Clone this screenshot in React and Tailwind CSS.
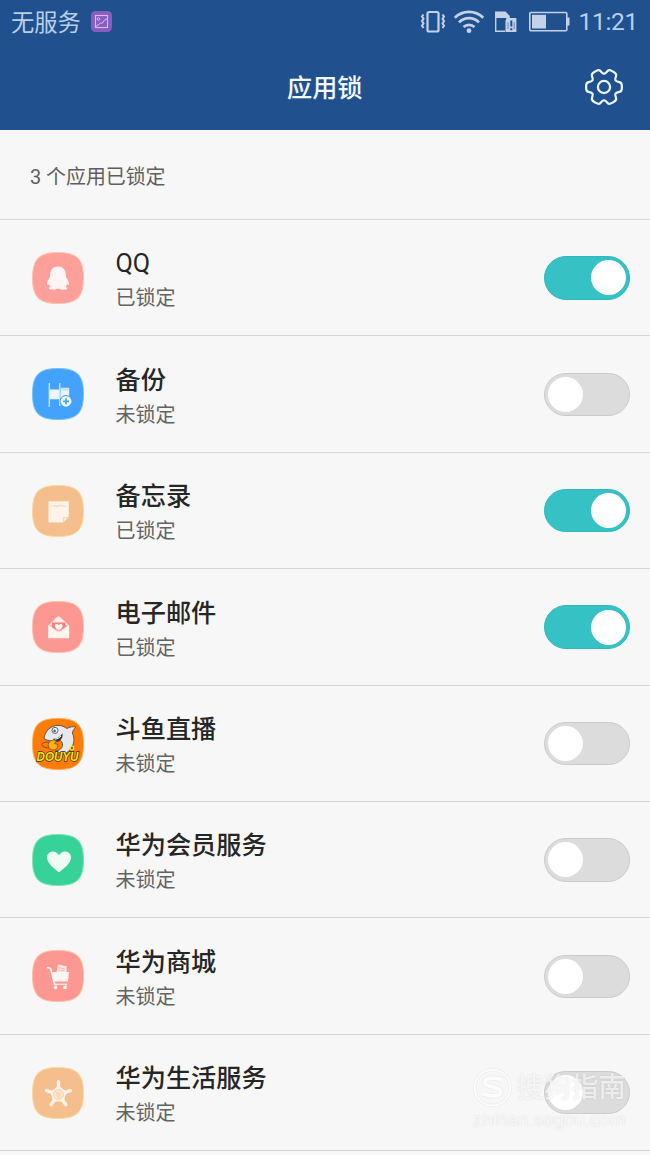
import { useState } from 'react';

const SQUIRCLE = 'M26 .5C45 .5 51.5 7 51.5 26S45 51.5 26 51.5S.5 45 .5 26S7 .5 26 .5Z';

function AppIcon({ fill, edge, children }) {
  return (
    <svg width="52" height="52" viewBox="0 0 52 52" className="shrink-0">
      <path d={SQUIRCLE} fill={fill} stroke={edge} strokeWidth="1" />
      {children}
    </svg>
  );
}

function QQIcon() {
  return (
    <AppIcon fill="#fe9f9a" edge="#fdc4ae">
      <path
        fill="#fff6f4"
        d="M26 14.6c4.8 0 7.7 3.4 7.8 8 0 1.2.1 2 .5 2.900 1.200 2.300 3 4.300 2.700 6.700-.1 1-1 1.100-1.900-.2-.3 1.100-.8 2-1.500 2.800 1.300.6 1.800 1.300 1.500 2-.6 1.100-5.700 1.300-7.600-.1h-3c-1.900 1.400-7 1.200-7.600.1-.3-.7.200-1.400 1.500-2-.7-.8-1.200-1.700-1.500-2.800-.9 1.300-1.800 1.200-1.900.2-.3-2.400 1.500-4.400 2.700-6.700.4-.9.500-1.700.5-2.900.1-4.600 3-8 7.800-8z"
      />
    </AppIcon>
  );
}

function BackupIcon() {
  return (
    <AppIcon fill="#42a2fc" edge="#7cc0fb">
      <path d="M17.300 15v24M27.800 15v23" stroke="#cfe7ff" strokeWidth="1.300" />
      <path d="M18 21.500h9.200v9.800H18zM28.600 20h8.600v10h-8.600z" fill="#eaf5ff" />
      <path d="M28.600 20h8.600M28.600 21.800h8.600" stroke="#9fcfff" strokeWidth=".8" />
      <circle cx="34" cy="33.300" r="6.200" fill="#42a2fc" />
      <circle cx="34" cy="33.300" r="5.400" fill="#f1f9ff" />
      <path d="M34 30.300v6M31 33.300h6" stroke="#42a2fc" strokeWidth="1.700" />
    </AppIcon>
  );
}

function MemoIcon() {
  return (
    <AppIcon fill="#f4bf8c" edge="#fbd8a0">
      <path d="M16.500 16.200h20.300v15.600l-5.800 5.700H16.500z" fill="#fff3ea" />
      <path d="M36.800 31.800l-5.800 5.700c.9-1.600 1-3.200.4-5 1.900.6 3.700.3 5.400-.7z" fill="#fff3ea" />
      <path d="M31 37.500c.9-1.600 1-3.200.4-5 1.900.6 3.700.3 5.400-.7" fill="none" stroke="#f4bf8c" strokeWidth=".7" />
      <path d="M19.500 21.600q2-1.600 4.500-.6t4.500-.8q1.500 1.200 5.500 1.100" fill="none" stroke="#f3cfae" strokeWidth="1" />
    </AppIcon>
  );
}

function MailIcon() {
  return (
    <AppIcon fill="#fd9792" edge="#fdc0a8">
      <path d="M16.300 24.500L24.900 16q1.600-1.300 3.200 0l8.900 8.500z" fill="#ffebe8" />
      <path d="M20 21.500h13.500v6h-13.500z" fill="#f5807c" />
      <path d="M26.700 29.500c-3-2-4.300-3.500-3.900-5.200.5-1.700 2.900-1.900 3.900-.1 1-1.800 3.400-1.600 3.900.1.400 1.700-.9 3.200-3.900 5.200z" fill="#fff4f0" />
      <path d="M16.200 23.800l7.500 5.200q3 2.600 6 0l7.500-5.200v13.400H16.200z" fill="#fff4f0" />
      <path d="M22.500 28.200q4.200 4.500 8.400 0" fill="none" stroke="#fbb5b0" strokeWidth=".8" />
    </AppIcon>
  );
}

function DouyuIcon() {
  return (
    <AppIcon fill="#fd7c06" edge="#fdae62">
      <path d="M20 25c-4-1.500-9-1-10.500 1.500 1.500 3 5 3.500 9 3.500" fill="none" stroke="#8d4a08" strokeWidth="1" />
      <path
        d="M12 20.500C13 13 18.500 7.500 26 7.400c4 0 6.800 1.300 8.800 3.200 2.700-1.700 5.700-2.300 9.200-1.500-2 1.600-3.200 3.500-3.700 5.900 2.700 5.500 1.900 12-2.100 16.500-2.500 3.500-6.700 5.500-12.200 6 1-1 1.500-2 1.500-3l-4-1.500c3.500-.5 6.500-2 7-5.500.3-2.500-.5-4-2-5-4.500 1-12.500 1-16.500-2z"
        fill="#e6e8ed" stroke="#4a403a" strokeWidth=".8"
      />
      <path d="M21 20.700c4 .5 7.500-1.500 9.300-5.400 1 3.700-.8 7-4.300 8.200-2 .2-4-.8-5-2.800z" fill="#34343a" />
      <path d="M22.800 21.300q4-.3 6.200-3.200" fill="none" stroke="#f6f6f6" strokeWidth="1" />
      <circle cx="23" cy="12.400" r="3" fill="#fff" stroke="#3a3a40" strokeWidth=".8" />
      <circle cx="22.600" cy="12.900" r="1.300" fill="#26789a" />
      <path d="M17 24.500c1.500-2.300 5-3 7.500-1.500l-2 2.500 3.500 1-1 4c-2.500 2.500-7 1.800-8.500-1.500-.6-1.500-.2-3.200.5-4.500z" fill="#f5b320" stroke="#7a4508" strokeWidth=".7" />
      <circle cx="40" cy="30" r="1.800" fill="#5a7a1b" stroke="#f4e332" strokeWidth="1.200" />
      <text
        x="25.500" y="43" textAnchor="middle" textLength="42" lengthAdjust="spacingAndGlyphs"
        fontFamily="Liberation Sans, sans-serif" fontSize="13" fontStyle="italic" fontWeight="700"
        fill="#f2e020" stroke="#3d3208" strokeWidth="1.500" paintOrder="stroke"
      >
        DOUYU
      </text>
    </AppIcon>
  );
}

function HeartIcon() {
  return (
    <AppIcon fill="#37d298" edge="#7fe5b4">
      <path d="M27 38.300C19.500 32.500 15 28.500 15 23.500c0-3.700 2.700-6.100 5.800-6.100 2.700 0 4.900 1.300 6.200 3.900 1.300-2.600 3.500-3.900 6.200-3.900 3.100 0 5.800 2.400 5.800 6.100 0 5-4.500 9-12 14.800z" fill="#edfcf4" />
    </AppIcon>
  );
}

function CartIcon() {
  return (
    <AppIcon fill="#fd9792" edge="#fdc0a8">
      <path d="M24.500 22l1.700-7.500 8.600 1.800L34.500 22z" fill="#ffe6e2" />
      <path d="M26.500 17.600l6.700 1.500M26 19.800l6.500 1" stroke="#fdb0aa" strokeWidth=".8" />
      <path d="M15.500 17.600l3 .9 4 15.500" fill="none" stroke="#fff4f1" strokeWidth="1.600" strokeLinecap="round" />
      <path d="M19 22h18l-1 9.500H21.500z" fill="#fff4f1" />
      <path d="M22 34.200h13.200" stroke="#fff4f1" strokeWidth="1.200" />
      <path d="M24 34v3M34 34v3" stroke="#fff4f1" strokeWidth="1" />
      <circle cx="23.600" cy="37.500" r="1.800" fill="#fff4f1" />
      <circle cx="33" cy="37.500" r="1.800" fill="#fff4f1" />
    </AppIcon>
  );
}

function LifeIcon() {
  return (
    <AppIcon fill="#f4bf8c" edge="#fbd8a0">
      {[0, 72, 144, 216, 288].map(a => (
        <g key={a} transform={`rotate(${a} 26.500 27.500)`} fill="#fff3e8">
          <rect x="24.700" y="13.300" width="3.600" height="5" rx="1.600" />
          <path d="M25.200 17h2.600l.6 3 3.100 3h-10l3.100-3z" />
        </g>
      ))}
      <circle cx="26.500" cy="27.500" r="6.800" fill="#fff3e8" />
      <circle cx="26.500" cy="27.500" r="5" fill="#fde6d1" stroke="#f6cba2" strokeWidth=".8" />
      <path d="M24 26h5M23.500 28h5.500M25 30h3.500" stroke="#f6cba2" strokeWidth=".8" />
    </AppIcon>
  );
}

const APPS = [
  { name: 'QQ', Icon: QQIcon, locked: true },
  { name: '备份', Icon: BackupIcon, locked: false },
  { name: '备忘录', Icon: MemoIcon, locked: true },
  { name: '电子邮件', Icon: MailIcon, locked: true },
  { name: '斗鱼直播', Icon: DouyuIcon, locked: false },
  { name: '华为会员服务', Icon: HeartIcon, locked: false },
  { name: '华为商城', Icon: CartIcon, locked: false },
  { name: '华为生活服务', Icon: LifeIcon, locked: false },
];

// Closed path through the polygon's points, each corner rounded off
function roundedPath(points, k) {
  const n = points.length;
  const mix = (a, b, t) => [a[0] + (b[0] - a[0]) * t, a[1] + (b[1] - a[1]) * t];
  const parts = points.map((p, i) => {
    const from = mix(p, points[(i + n - 1) % n], k);
    const to = mix(p, points[(i + 1) % n], k);
    return `${i ? 'L' : 'M'}${from.join(' ')}Q${p.join(' ')} ${to.join(' ')}`;
  });
  return parts.join('') + 'Z';
}

function polar(r, deg) {
  const a = (deg * Math.PI) / 180;
  return [20 + r * Math.cos(a), 20 + r * Math.sin(a)];
}

const GEAR = roundedPath(
  [0, 60, 120, 180, 240, 300].flatMap(a => [
    polar(18.4, a - 14),
    polar(18.4, a + 14),
    polar(13.4, a + 25),
    polar(13.4, a + 35),
  ]),
  0.4
);

function GearIcon() {
  return (
    <svg width="40" height="40" viewBox="0 0 40 40" fill="none" stroke="#eaf5ff" strokeWidth="2.200">
      <path d={GEAR} />
      <circle cx="20" cy="20" r="6.100" />
    </svg>
  );
}

function StatusBar() {
  return (
    <div className="flex h-11 items-center pl-[11px] pr-3 text-[#b9cfea]">
      <span className="pt-[3px] text-[23.3px] leading-none">无服务</span>
      <svg width="21" height="21" viewBox="0 0 21 21" fill="none" className="mb-[1px] ml-[10px]">
        <rect width="21" height="21" rx="4.500" fill="#865ec2" />
        <rect x="4.500" y="4.500" width="12" height="12" stroke="#dbbdf0" strokeWidth="1.100" />
        <circle cx="7.500" cy="8" r="1.300" stroke="#dbbdf0" strokeWidth=".9" />
        <path d="M5 15.500l4.500-3.500 1.800.3 2-3 3-1.500" stroke="#dbbdf0" strokeWidth="1" />
      </svg>
      <div className="ml-auto flex items-center">
        <svg width="26" height="24" viewBox="0 0 26 24" fill="none" stroke="#c3d2e9">
          <rect x="7.500" y="2" width="11" height="19.500" rx="1.500" strokeWidth="2.200" />
          <path d="M3.500 4.500l-1.500 2 1.500 2.300-1.500 2.300 1.500 2.300-1.500 2.300 1.500 2.300M22.500 4.500l1.500 2-1.500 2.300 1.500 2.300-1.500 2.300 1.500 2.300-1.500 2.300" strokeWidth="2" />
        </svg>
        <svg width="32" height="24" viewBox="0 0 32 24" fill="none" stroke="#c3d2e9" strokeWidth="2.700" className="ml-[7px]">
          <path d="M1.800 7.700a20 20 0 0 1 28.400 0M6 12.400a14 14 0 0 1 20 0M10.500 17a8 8 0 0 1 11 0" />
          <circle cx="16" cy="20.700" r="2.400" fill="#c3d2e9" stroke="none" />
        </svg>
        <svg width="23" height="24" viewBox="0 0 23 24" fill="none" className="ml-[9px]">
          <path d="M1.700 2v19.200H11" stroke="#c3d2e9" strokeWidth="1.400" />
          <path d="M1 1.500h10.500l4.300 4.500v2H1z" fill="#c3d2e9" />
          <path d="M12.500 8h9.900v14h-10.900V11z" fill="#c3d2e9" />
          <path d="M17.300 10.500v6M17.300 18.300v2" stroke="#21508f" strokeWidth="2" />
          <path d="M14 19v-6.500M20.200 19v-6.500" stroke="#21508f" strokeWidth=".6" />
        </svg>
        <svg width="41" height="24" viewBox="0 0 41 24" fill="none" className="ml-[12px]">
          <rect x=".8" y="2.500" width="37" height="18.300" rx="1" stroke="#c3d2e9" strokeWidth="1.600" />
          <path d="M3 4.800h14v13.700H3z" fill="#c3d2e9" />
          <path d="M38 7.500h2.500v8H38z" fill="#c3d2e9" />
        </svg>
        <span className="ml-[8px] text-[24.5px] leading-none tracking-[-0.3px]">11:21</span>
      </div>
    </div>
  );
}

function Toggle({ on, onChange }) {
  return (
    <button
      role="switch"
      aria-checked={on}
      onClick={onChange}
      className={`flex h-[43.5px] w-[85.5px] shrink-0 items-center rounded-full border px-[3px] ${
        on ? 'justify-end border-[#2fb9bd] bg-[#36c1c5]' : 'justify-start border-[#cbcbcb] bg-[#dcdcdc]'
      }`}
    >
      <span className="size-[35px] rounded-full bg-white" />
    </button>
  );
}

function AppRow({ app, onToggle }) {
  const { name, Icon, locked } = app;
  return (
    <li className="flex h-[116.4px] items-center border-b border-[#d5d6d6] pl-8 pr-[20.5px] pt-[0.5px]">
      <Icon />
      <div className="ml-[31.5px] flex-1 pt-[7px]">
        <div className="text-[25.2px] font-medium leading-[35px] text-[#262626]">
          <span className={name === 'QQ' ? 'font-normal' : ''}>{name}</span>
        </div>
        <div className="text-[20px] leading-[35px] text-[#636363]">{locked ? '已锁定' : '未锁定'}</div>
      </div>
      <Toggle on={locked} onChange={onToggle} />
    </li>
  );
}

function Watermark() {
  return (
    <div className="pointer-events-none absolute left-[473px] top-[1067px] w-[156px] text-white/70 [text-shadow:0_0_2px_rgba(0,0,0,0.12)]">
      <div className="flex items-center">
        <svg width="39" height="39" viewBox="0 0 40 40" fill="none">
          <circle cx="20" cy="20" r="18.300" stroke="#ececec" strokeWidth="3.400" />
          <circle cx="20" cy="20" r="18.300" stroke="#fcfcfc" strokeWidth="2" />
          <path d="M30 12.500c-4-2.500-17-3.500-18 1.500-1 6 16.500 4.500 16.500 10.500 0 5-12 5-18 2" stroke="#e9e9e9" strokeWidth="5.300" />
          <path d="M30 12.500c-4-2.500-17-3.500-18 1.500-1 6 16.500 4.500 16.500 10.500 0 5-12 5-18 2" stroke="#fcfcfc" strokeWidth="4" />
        </svg>
        <span className="ml-[4.5px] whitespace-nowrap pt-[3px] text-[27.3px] font-medium leading-[37px]">搜狗指南</span>
      </div>
      <div className="mt-[1px] whitespace-nowrap font-['Liberation_Sans',sans-serif] text-[18.8px] leading-6">zhinan.sogou.com</div>
    </div>
  );
}

export default function App() {
  const [apps, setApps] = useState(APPS);

  function toggleApp(index) {
    setApps(apps.map((app, i) => (i === index ? { ...app, locked: !app.locked } : app)));
  }

  const lockedCount = apps.filter(app => app.locked).length;

  return (
    <div className="relative h-[1155px] w-[650px] overflow-hidden bg-[#f7f7f7] font-['Roboto','Noto_Sans_CJK_SC',sans-serif]">
      <header className="h-[130px] bg-[#21508f]">
        <StatusBar />
        <div className="grid h-[86px] grid-cols-[1fr_auto_1fr] items-center pr-[26.5px]">
          <h1 className="col-start-2 pl-[26px] pt-[4px] text-[25.2px] font-medium leading-none text-[#f1f8ff]">应用锁</h1>
          <button className="justify-self-end pb-[1px]">
            <GearIcon />
          </button>
        </div>
      </header>

      <div className="flex h-[90px] items-center border-b border-[#d5d6d6] pl-[30px] pt-[6px] text-[19.9px] text-[#5f5f5f]">
        {lockedCount} 个应用已锁定
      </div>

      <ul>
        {apps.map((app, i) => (
          <AppRow key={app.name} app={app} onToggle={() => toggleApp(i)} />
        ))}
      </ul>

      <Watermark />
    </div>
  );
}
